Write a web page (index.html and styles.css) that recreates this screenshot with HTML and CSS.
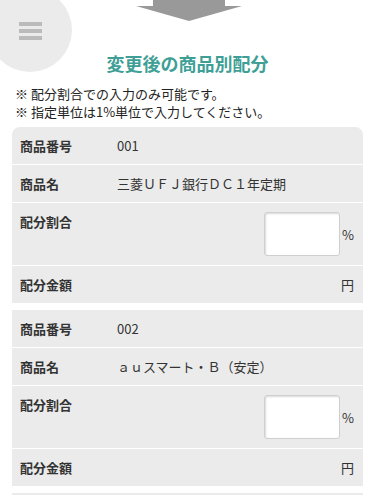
FILE: index.html
```html
<!DOCTYPE html>
<html lang="ja">

<head>
    <meta charset="UTF-8">
    <meta name="viewport" content="width=device-width, initial-scale=1.0">
    <title>変更後の商品別配分</title>
    <link rel="stylesheet" href="styles.css">
</head>

<body>
    <div class="menu">
        <span></span>
        <span></span>
        <span></span>
    </div>

    <svg class="arrow" width="106" height="21" viewBox="0 0 106 21">
        <path d="M17 0 H89 V6 H106 L53 21 L0 6 H17 Z" fill="#999999" />
    </svg>

    <h1 class="title">変更後の商品別配分</h1>

    <div class="notes">
        <p>※ 配分割合での入力のみ可能です。</p>
        <p>※ 指定単位は1%単位で入力してください。</p>
    </div>

    <div class="list">
        <div class="card first">
            <div class="row">
                <div class="label">商品番号</div>
                <div class="value">001</div>
            </div>
            <div class="row">
                <div class="label">商品名</div>
                <div class="value">三菱ＵＦＪ銀行ＤＣ１年定期</div>
            </div>
            <div class="row rate">
                <div class="label">配分割合</div>
                <div class="unit"><input type="text"><span>%</span></div>
            </div>
            <div class="row">
                <div class="label">配分金額</div>
                <div class="unit"><span>円</span></div>
            </div>
        </div>

        <div class="card">
            <div class="row">
                <div class="label">商品番号</div>
                <div class="value">002</div>
            </div>
            <div class="row">
                <div class="label">商品名</div>
                <div class="value">ａｕスマート・Ｂ（安定）</div>
            </div>
            <div class="row rate">
                <div class="label">配分割合</div>
                <div class="unit"><input type="text"><span>%</span></div>
            </div>
            <div class="row">
                <div class="label">配分金額</div>
                <div class="unit"><span>円</span></div>
            </div>
        </div>

        <div class="card more"></div>
    </div>
</body>

</html>
```

FILE: styles.css
```css
body {
    margin: 0;
    font-family: "Noto Sans CJK JP", "Noto Sans", sans-serif;
    color: #222;
    background-color: #fff;
    position: relative;
    overflow: hidden;
}

.menu {
    position: absolute;
    left: -12px;
    top: -12px;
    width: 84px;
    height: 84px;
    border-radius: 50%;
    background-color: #ebebeb;
    display: flex;
    flex-direction: column;
    justify-content: center;
    align-items: center;
    gap: 3px;
    padding-top: 2px;
    box-sizing: border-box;
}

.menu span {
    display: block;
    width: 23px;
    height: 4px;
    background-color: #bbbbbb;
}

.arrow {
    display: block;
    margin: 0 auto;
    position: relative;
    left: 1px;
}

.title {
    margin: 29px 0 0;
    text-align: center;
    font-size: 18px;
    line-height: 26px;
    font-weight: bold;
    color: #3f9f96;
}

.notes {
    margin-top: 9px;
    padding-left: 15px;
    font-size: 13px;
    line-height: 18px;
}

.notes p {
    margin: 0;
}

.list {
    margin: 6px 12px 0;
    display: flex;
    flex-direction: column;
    gap: 7px;
}

.card {
    background-color: #ebebeb;
}

.card.first {
    border-radius: 8px 8px 0 0;
}

.card.more {
    height: 20px;
}

.row {
    display: flex;
    align-items: flex-start;
    padding: 10px 9px 10px 8px;
    font-size: 13px;
    line-height: 17px;
    color: #333;
    border-bottom: 1px solid #fff;
}

.row:last-child {
    border-bottom: none;
}

.label {
    width: 97px;
    flex-shrink: 0;
    font-weight: bold;
}

.value {
    flex: 1;
}

.unit {
    margin-left: auto;
    display: flex;
    align-items: center;
    gap: 2px;
}

.rate {
    padding-top: 9px;
    padding-bottom: 9px;
}

.rate .label {
    margin-top: 1px;
}

.unit input {
    width: 76px;
    height: 44px;
    box-sizing: border-box;
    border: 1px solid #cfcfcf;
    border-radius: 3px;
    background-color: #fff;
    box-shadow: inset 1px 1px 2px rgba(0, 0, 0, 0.15);
    margin: 0;
    padding: 0 4px;
}
```
